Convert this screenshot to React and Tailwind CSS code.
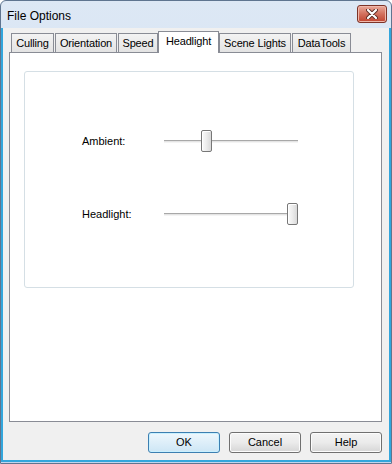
import React from "react";

const tabs = [
  { label: "Culling", w: "w-[43px]", ml: "ml-[2px]" },
  { label: "Orientation", w: "w-[62px]", ml: "ml-[1px]" },
  { label: "Speed", w: "w-[40px]", ml: "ml-[1px]" },
  { label: "Headlight", w: "w-[61px]", ml: "ml-0", active: true },
  { label: "Scene Lights", w: "w-[72px]", ml: "ml-0" },
  { label: "DataTools", w: "w-[59px]", ml: "ml-[1px]" },
];

function Slider({ thumb }) {
  return (
    <div className="relative w-[134px] h-[22px] flex items-center">
      <div className="w-full h-[3px] border-t border-[#a8a8a8] bg-[#e4e4e4] border-b border-b-[#f4f4f4]" />
      <div
        className={`absolute top-0 ${thumb} w-[11px] h-[22px] rounded-[2px] border border-[#777] bg-gradient-to-r from-[#fbfbfb] via-[#ececec] to-[#d9d9d9] shadow-[inset_1px_1px_0_#fff]`}
      />
    </div>
  );
}

function Btn({ children, primary }) {
  return (
    <button
      className={
        primary
          ? "w-[72px] h-[21px] rounded-[3px] border border-[#3c7fb1] bg-gradient-to-b from-[#eef7fd] to-[#cde6f5] shadow-[inset_0_0_0_1px_#c8f0ff] text-[11px] text-black flex items-center justify-center"
          : "w-[72px] h-[21px] rounded-[3px] border border-[#707070] bg-gradient-to-b from-[#f4f4f4] via-[#ebebeb] to-[#d6d6d6] shadow-[inset_0_0_0_1px_#fcfcfc] text-[11px] text-black flex items-center justify-center"
      }
    >
      {children}
    </button>
  );
}

export default function App() {
  return (
    <div
      className="w-[392px] h-[464px] flex flex-col rounded-t-[6px] border border-[#5f7590] bg-gradient-to-b from-[#dde8f5] to-[#c3d5ec] pb-[1px]"
      style={{ fontFamily: '"Liberation Sans", Arial, sans-serif' }}
    >
      {/* ── Title bar ── */}
      <div className="h-[27px] flex items-start justify-between pl-[6px] pr-[4px]">
        <span className="mt-[6px] text-[12px] text-black">File Options</span>
        <div className="mt-[4px] w-[30px] h-[18px] rounded-[3px] border border-[#7d3328] bg-gradient-to-b from-[#e9a99b] via-[#d2705d] to-[#c0432f] flex items-center justify-center shadow-[inset_0_0_0_1px_#f0b8ab]">
          <svg width="12" height="10" viewBox="0 0 12 10">
            <path d="M2 1 L10 9 M10 1 L2 9" stroke="#5a2a22" strokeWidth="4" strokeLinecap="round" />
            <path d="M2 1 L10 9 M10 1 L2 9" stroke="#ffffff" strokeWidth="2.2" strokeLinecap="round" />
          </svg>
        </div>
      </div>

      {/* ── Client area ── */}
      <div className="flex-1 flex flex-col bg-[#f0f0f0] border-x-2 border-b-2 border-[#33a6dc]">
        {/* tabs */}
        <div className="h-[24px] pt-[3px] pl-[6px] flex items-end tracking-[-0.15px]">
          {tabs.map((t) =>
            t.active ? (
              <div
                key={t.label}
                className={`${t.w} ${t.ml} h-[22px] mb-[-1px] relative z-10 bg-white border-t border-x border-[#898c95] flex items-center justify-center pb-[3px] text-[11px] text-black`}
              >
                {t.label}
              </div>
            ) : (
              <div
                key={t.label}
                className={`${t.w} ${t.ml} h-[19px] bg-gradient-to-b from-[#f3f3f3] to-[#e3e3e3] border-t border-x border-[#898c95] flex items-center justify-center text-[11px] text-black`}
              >
                {t.label}
              </div>
            )
          )}
        </div>

        {/* panel */}
        <div className="h-[370px] ml-[6px] mr-[7px] bg-white border border-[#898c95]">
          <div className="ml-[14px] mt-[18px] w-[330px] h-[217px] rounded-[3px] border border-[#d5dfe5] pt-[58px] pl-[57px] flex flex-col gap-[51px]">
            <div className="flex items-center">
              <span className="w-[82px] text-[11px] text-black">Ambient:</span>
              <Slider thumb="left-[37px]" />
            </div>
            <div className="flex items-center">
              <span className="w-[82px] text-[11px] text-black">Headlight:</span>
              <Slider thumb="left-[123px]" />
            </div>
          </div>
        </div>

        {/* buttons */}
        <div className="mt-[10px] mr-[7px] flex justify-end gap-[9px]">
          <Btn primary>OK</Btn>
          <Btn>Cancel</Btn>
          <Btn>Help</Btn>
        </div>
      </div>
    </div>
  );
}
